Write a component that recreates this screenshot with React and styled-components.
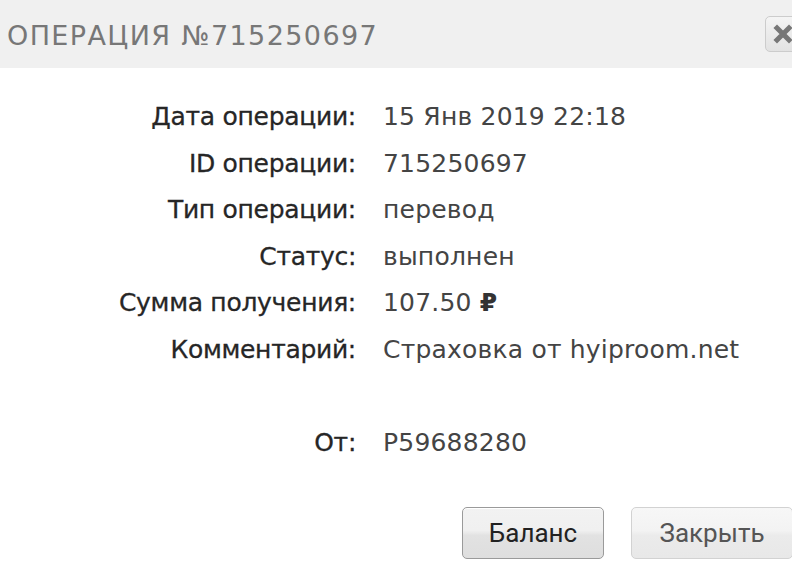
import { createGlobalStyle, styled } from 'styled-components';

const GlobalStyle = createGlobalStyle`
    html, body {
        margin: 0;
        padding: 0;
        background: #fff;
        overflow: hidden;
    }
`;

const Dialog = styled.div`
    width: 830px;
    height: 574px;
    background: #fff;
    font-family: "DejaVu Sans", "Liberation Sans", sans-serif;
`;

const Header = styled.div`
    display: flex;
    align-items: center;
    justify-content: space-between;
    height: 68px;
    padding: 0 29px 0 7px;
    background: #f0f0f0;
    box-sizing: border-box;
`;

const Title = styled.h1`
    margin: 0;
    font-family: "DejaVu Sans", sans-serif;
    font-size: 27px;
    font-weight: 400;
    letter-spacing: 1.4px;
    color: #777;
    padding-top: 2px;
`;

const CloseButton = styled.button`
    display: flex;
    align-items: center;
    justify-content: center;
    width: 36px;
    height: 36px;
    padding: 0;
    border: 1px solid #ccc;
    border-radius: 5px;
    background: linear-gradient(#f4f4f4, #e2e2e2);
`;

const Details = styled.div`
    display: grid;
    grid-template-columns: 356px 1fr;
    column-gap: 27px;
    padding-top: 26px;
`;

const Label = styled.div`
    height: 46.5px;
    line-height: 46.5px;
    text-align: right;
    font-size: 25px;
    letter-spacing: -0.3px;
    color: #262626;
    white-space: nowrap;
    -webkit-text-stroke: 0.3px #262626;
`;

const Value = styled.div`
    height: 46.5px;
    line-height: 46.5px;
    font-size: 25px;
    letter-spacing: 0.2px;
    color: #444;
    white-space: nowrap;
`;

const Currency = styled.span`
    font-weight: 700;
    color: #333;
`;

const Actions = styled.div`
    display: flex;
    gap: 27px;
    padding: 41px 0 0 462px;
`;

const Button = styled.button`
    width: ${(p) => p.$width}px;
    height: 52px;
    padding: 0;
    border-radius: 5px;
    border: 1px solid ${(p) => (p.$primary ? '#9a9a9a' : '#d2d2d2')};
    background: ${(p) =>
        p.$primary
            ? 'linear-gradient(#f2f2f2, #f0f0f0 45%, #e2e2e2 55%, #dedede)'
            : 'linear-gradient(#f7f7f7, #f3f3f3 45%, #ebebeb 55%, #e8e8e8)'};
    box-shadow: ${(p) => (p.$primary ? 'inset 0 1px 0 #fff' : 'none')};
    font-family: Roboto, "Liberation Sans", sans-serif;
    font-size: 26px;
    color: ${(p) => (p.$primary ? '#222' : '#555')};
`;

const rows = [
    ['Дата операции:', '15 Янв 2019 22:18'],
    ['ID операции:', '715250697'],
    ['Тип операции:', 'перевод'],
    ['Статус:', 'выполнен'],
    ['Сумма получения:', <>107.50 <Currency>₽</Currency></>],
    ['Комментарий:', 'Страховка от hyiproom.net'],
    ['', ''],
    ['От:', 'P59688280'],
];

export default function App() {
    return (
        <Dialog>
            <GlobalStyle />
            <Header>
                <Title>ОПЕРАЦИЯ №715250697</Title>
                <CloseButton aria-label="close">
                    <svg width="20" height="20" viewBox="0 0 20 20">
                        <path d="M4 4 L16 16 M16 4 L4 16" stroke="#777" strokeWidth="5" strokeLinecap="square" />
                    </svg>
                </CloseButton>
            </Header>
            <Details>
                {rows.map(([label, value], index) => (
                    <>
                        <Label key={'l' + index}>{label}</Label>
                        <Value key={'v' + index}>{value}</Value>
                    </>
                ))}
            </Details>
            <Actions>
                <Button $primary $width={142}>Баланс</Button>
                <Button $width={162}>Закрыть</Button>
            </Actions>
        </Dialog>
    );
}
